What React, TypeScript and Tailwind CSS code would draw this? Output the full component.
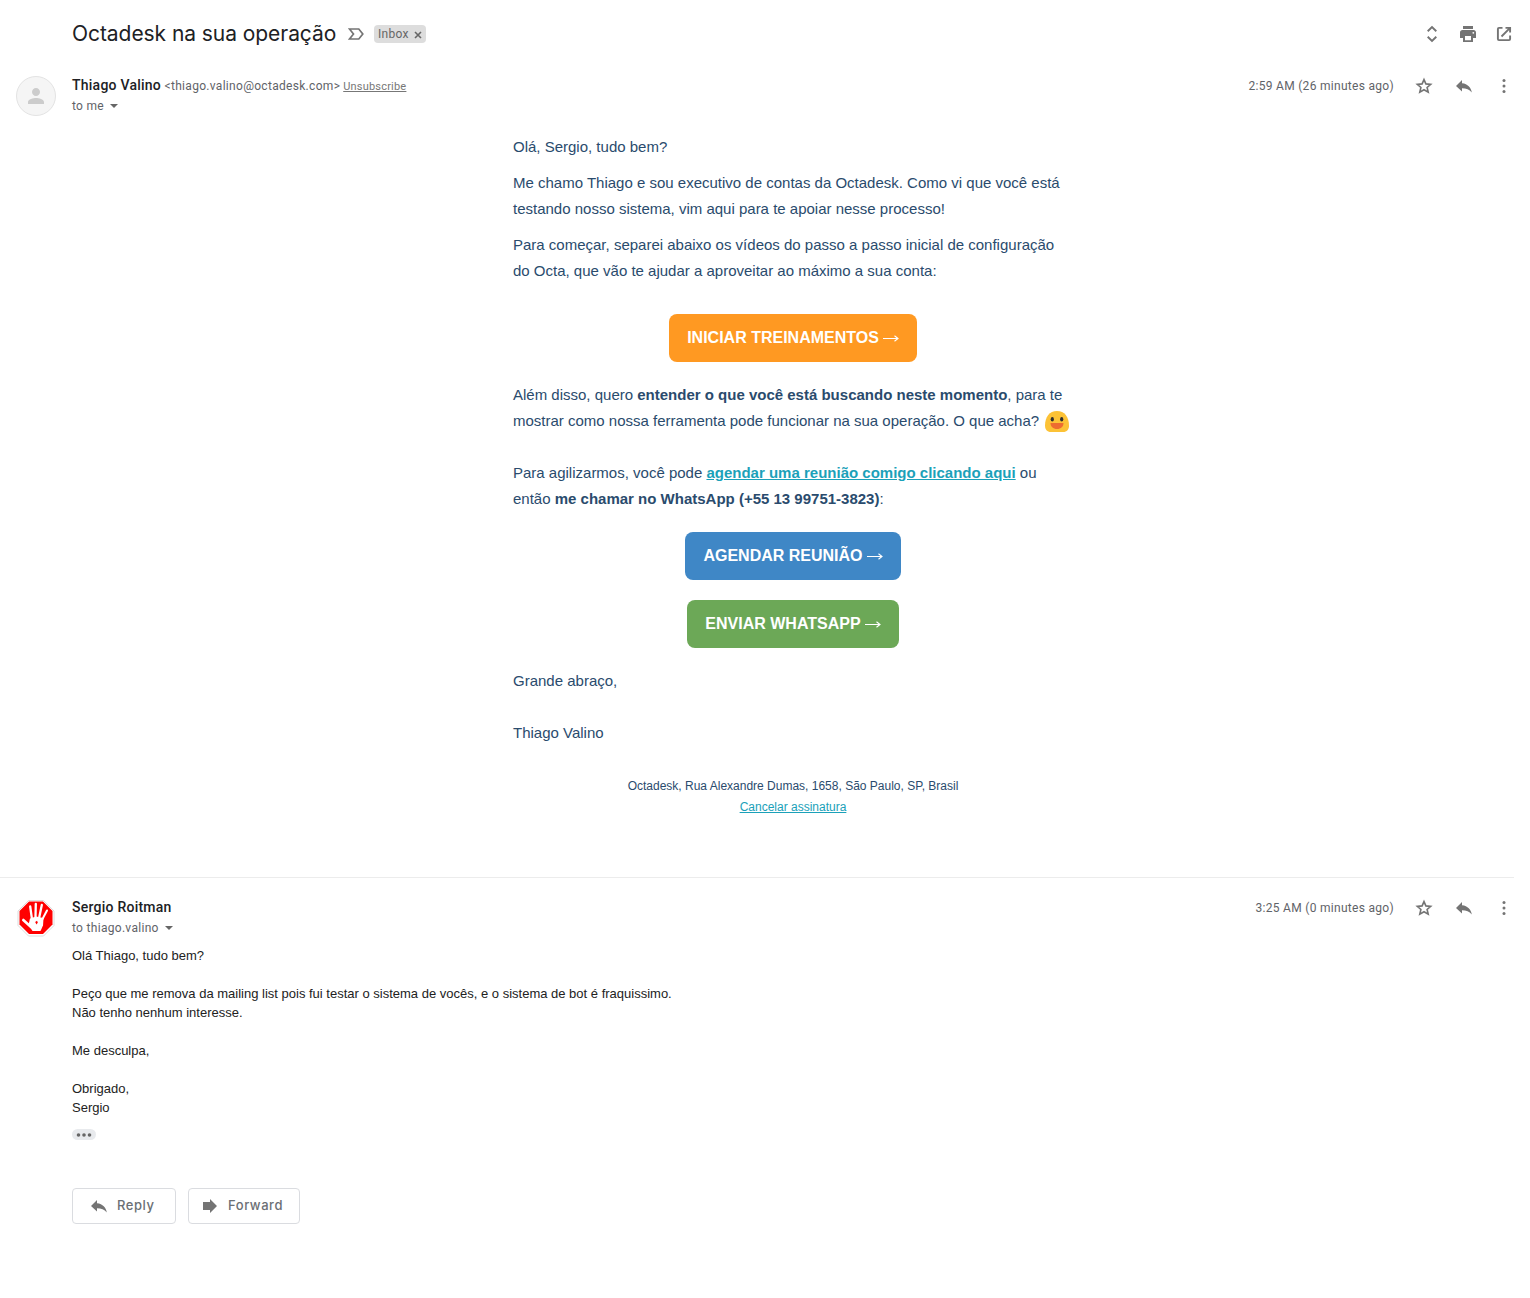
import type { ReactNode } from 'react'
import { MdPerson } from 'react-icons/md'

function ReplyIcon() {
  return (
    <svg width="20" height="20" viewBox="0 0 20 20" fill="#747474">
      <path d="M8 7.300V4L2 9.900L8 15.600V12.200C12.300 12.200 15.400 13.200 17.800 16.400C17 11.600 13.800 7.900 8 7.300Z" />
    </svg>
  )
}

function StarIcon() {
  return (
    <svg width="20" height="20" viewBox="0 0 20 20" fill="none">
      <path
        d="M10 3.600L11.900 7.900L16.700 8.400L13.100 11.500L14.200 16.200L10 13.700L5.800 16.200L6.900 11.500L3.300 8.400L8.100 7.900Z"
        stroke="#747474"
        strokeWidth="1.600"
      />
    </svg>
  )
}

function MoreIcon() {
  return (
    <svg width="20" height="20" viewBox="0 0 20 20" fill="#747474">
      <circle cx="10" cy="4.500" r="1.500" />
      <circle cx="10" cy="10" r="1.500" />
      <circle cx="10" cy="15.500" r="1.500" />
    </svg>
  )
}

interface MessageHeaderProps {
  name: string
  email?: string
  recipient: string
  time: string
  avatar: ReactNode
}

function MessageHeader({ name, email, recipient, time, avatar }: MessageHeaderProps) {
  return (
    <header className="flex h-10 items-start pl-4 pr-4">
      <div className="flex h-10 w-14 shrink-0">{avatar}</div>
      <div className="flex-1">
        <div className="flex h-5 items-center whitespace-nowrap">
          <h3 className="pb-0.5 text-sm font-medium tracking-[0.24px] text-[#202124]">{name}</h3>
          {email && (
            <>
              <span className="ml-[3.5px] text-xs tracking-[0.3px] text-[#5f6368]">&lt;{email}&gt;</span>
              <a className="ml-[3px] pt-0.5 text-[11px] tracking-[0.2px] text-[#777] underline">Unsubscribe</a>
            </>
          )}
        </div>
        <div className="flex h-5 items-center text-xs tracking-[0.3px] text-[#5f6368]">
          to {recipient}
          <svg width="8" height="4" viewBox="0 0 8 4" className="ml-1.5">
            <path d="M0 0H8L4 4Z" fill="#666" />
          </svg>
        </div>
      </div>
      <div className="flex h-5 items-center gap-5">
        <span className="text-xs tracking-[0.3px] text-[#5f6368]">{time}</span>
        <StarIcon />
        <ReplyIcon />
        <MoreIcon />
      </div>
    </header>
  )
}

function CallToAction({ color, children }: { color: string; children: ReactNode }) {
  return (
    <a className={`flex h-12 items-center rounded-lg px-[18px] text-base font-bold text-white ${color}`}>
      {children}
      <svg width="16" height="8" viewBox="0 0 16 8" fill="none" className="ml-1 mt-0.5">
        <path d="M0 3.500H15" stroke="currentColor" />
        <path d="M11.500 0.800L15 3.500L11.500 6.200" stroke="currentColor" strokeWidth="1.100" />
      </svg>
    </a>
  )
}

function SmileEmoji() {
  return (
    <svg width="26" height="26" viewBox="0 0 26 26" className="-mt-0.5 ml-[5px] inline-block align-middle">
      <path d="M13 3C5.500 3 1 9 1 17.500C1 21.500 3 24 7 24H19C23 24 25 21.500 25 17.500C25 9 20.500 3 13 3Z" fill="#fcc236" />
      <ellipse cx="8.300" cy="11.300" rx="1.600" ry="2.200" fill="#2f2f2f" />
      <ellipse cx="17.700" cy="11.300" rx="1.600" ry="2.200" fill="#2f2f2f" />
      <path d="M6.500 15H19.500C19.500 18.500 17 21 13 21C9 21 6.500 18.500 6.500 15Z" fill="#ed6c30" />
    </svg>
  )
}

function StopHand() {
  return (
    <svg width="40" height="40" viewBox="0 0 40 40">
      <path d="M12.500 2.500H27.500L38 13V27.500L27.500 38H12.500L2 27.500V13Z" fill="#fff" stroke="#dcdcdc" />
      <path d="M13 3.500H27L36.500 13V26.500L27 36H13L3.500 26.500V13Z" fill="#f00" />
      <g fill="none" stroke="#fff" strokeLinecap="round">
        <path d="M15.800 20L14.200 8.500" strokeWidth="2.300" />
        <path d="M19.500 19L19.800 6" strokeWidth="2.300" />
        <path d="M23.300 19L25.800 7" strokeWidth="2.300" />
        <path d="M26.500 21L31 12.500" strokeWidth="2" />
        <path d="M15 29L7.300 22" strokeWidth="2.600" />
      </g>
      <path d="M14 20.500L20 18.500L27.500 20L27 27.500L24.500 33H16.500L12.500 27Z" fill="#fff" />
      <path d="M19.200 24L21 22.800L21.800 24.500L20.500 26.500Z" fill="#f00" />
    </svg>
  )
}

function OctadeskEmail() {
  return (
    <div className="ml-[72px] mr-4 mt-[18px]">
      <div className="mx-auto w-[560px] font-['Liberation_Sans',Arial,sans-serif] text-[15px] leading-[26px] text-[#2a4b6d]">
        <p className="mb-2.5">Olá, Sergio, tudo bem?</p>
        <p className="mb-2.5">
          Me chamo Thiago e sou executivo de contas da Octadesk. Como vi que você está
          <br />
          testando nosso sistema, vim aqui para te apoiar nesse processo!
        </p>
        <p>
          Para começar, separei abaixo os vídeos do passo a passo inicial de configuração
          <br />
          do Octa, que vão te ajudar a aproveitar ao máximo a sua conta:
        </p>
        <div className="my-5 flex justify-center pt-2.5">
          <CallToAction color="bg-[#ff9922]">INICIAR TREINAMENTOS</CallToAction>
        </div>
        <p className="h-[52px] whitespace-nowrap">
          Além disso, quero <b>entender o que você está buscando neste momento</b>, para te
          <br />
          mostrar como nossa ferramenta pode funcionar na sua operação. O que acha?
          <SmileEmoji />
        </p>
        <p className="mt-[26px]">
          Para agilizarmos, você pode{' '}
          <a className="font-bold text-[#1ba1b9] underline">agendar uma reunião comigo clicando aqui</a> ou
          <br />
          então <b>me chamar no WhatsApp (+55 13 99751-3823)</b>:
        </p>
        <div className="my-5 flex flex-col items-center gap-5">
          <CallToAction color="bg-[#3f87c6]">AGENDAR REUNIÃO</CallToAction>
          <CallToAction color="bg-[#6ca857]">ENVIAR WHATSAPP</CallToAction>
        </div>
        <p>Grande abraço,</p>
        <p className="mt-[26px]">Thiago Valino</p>
        <footer className="mt-[30px] text-center text-xs leading-[21px]">
          <p>Octadesk, Rua Alexandre Dumas, 1658, São Paulo, SP, Brasil</p>
          <a className="text-[#1ba1b9] underline">Cancelar assinatura</a>
        </footer>
      </div>
    </div>
  )
}

export default function App() {
  return (
    <main className="h-[1298px] overflow-hidden bg-white font-[Roboto,Arial,sans-serif]">
      <div className="flex h-[76px] items-start pl-[72px] pr-4 pt-5">
        <div className="flex h-7 items-center">
          <h1 className="w-[264px] whitespace-nowrap font-['Inter',sans-serif] text-[21px] tracking-[-0.06px] text-[#202124]">
            Octadesk na sua operação
          </h1>
          <svg width="16" height="12" viewBox="0 0 16 12" fill="none" className="ml-3">
            <path d="M1.500 1H10.800L14.800 6L10.800 11H1.500L5.500 6Z" stroke="#747474" strokeWidth="1.700" />
          </svg>
          <span className="ml-2.5 flex h-[18px] w-[52px] items-center rounded bg-[#ddd] px-1 text-xs tracking-[0.3px] text-[#666]">
            Inbox
            <svg width="8" height="8" viewBox="0 0 8 8" className="ml-[5px] mt-0.5 shrink-0">
              <path d="M1 1L7 7M7 1L1 7" stroke="#666" strokeWidth="1.600" />
            </svg>
          </span>
        </div>
        <div className="ml-auto flex h-7 items-center gap-4">
          <svg width="20" height="20" viewBox="0 0 20 20" fill="none" stroke="#747474" strokeWidth="1.900">
            <path d="M5.700 7.300L10 3.100L14.300 7.300M5.700 12.700L10 16.900L14.300 12.700" />
          </svg>
          <svg width="20" height="20" viewBox="0 0 20 20" fill="#747474">
            <path d="M5 2H15V5H5Z" />
            <path d="M4.500 6H15.500C17 6 18 7 18 8.500V14H15V11H5V14H2V8.500C2 7 3 6 4.500 6Z" />
            <path fillRule="evenodd" d="M5 10.500H15V18H5ZM7 12V16.300H13V12Z" />
            <circle cx="15.300" cy="8.800" r="0.900" fill="#fff" />
          </svg>
          <svg width="20" height="20" viewBox="0 0 20 20" fill="none" stroke="#747474" strokeWidth="1.900">
            <path d="M8.500 3.900H5C4.300 3.900 3.900 4.300 3.900 5V15C3.900 15.700 4.300 16.100 5 16.100H15C15.700 16.100 16.100 15.700 16.100 15V11.500" />
            <path d="M11.500 3.900H16.100V8.500M15.800 4.200L7.500 12.500" />
          </svg>
        </div>
      </div>

      <MessageHeader
        name="Thiago Valino"
        email="thiago.valino@octadesk.com"
        recipient="me"
        time="2:59 AM (26 minutes ago)"
        avatar={
          <div className="flex size-10 items-center justify-center rounded-full border border-[#e3e3e3] bg-[#f5f5f5]">
            <MdPerson className="size-6 text-[#ccc]" />
          </div>
        }
      />
      <OctadeskEmail />

      <hr className="mb-5 mr-4 mt-[59px] border-[#ececec]" />

      <MessageHeader
        name="Sergio Roitman"
        recipient="thiago.valino"
        time="3:25 AM (0 minutes ago)"
        avatar={<StopHand />}
      />
      <div className="ml-[72px] mt-2 font-['Liberation_Sans',Arial,sans-serif] text-[13px] leading-[19px] text-[#222]">
        <p>Olá Thiago, tudo bem?</p>
        <p className="mt-[19px]">
          Peço que me remova da mailing list pois fui testar o sistema de vocês, e o sistema de bot é fraquissimo.
        </p>
        <p>Não tenho nenhum interesse.</p>
        <p className="mt-[19px]">Me desculpa,</p>
        <p className="mt-[19px]">Obrigado,</p>
        <p>Sergio</p>
        <div className="mt-3 flex h-[11px] w-6 items-center justify-center rounded-full bg-[#e8eaed]">
          <svg width="16" height="4" viewBox="0 0 16 4" fill="#666">
            <circle cx="2.500" cy="2" r="1.800" />
            <circle cx="8" cy="2" r="1.800" />
            <circle cx="13.500" cy="2" r="1.800" />
          </svg>
        </div>
      </div>

      <div className="ml-[72px] mt-12 flex gap-3 font-['Inter',sans-serif] text-[13px] font-medium tracking-[0.55px] text-[#6b6f74]">
        <button className="flex h-9 w-[104px] items-center rounded border border-[#dadce0] pl-4">
          <span className="mr-2">
            <ReplyIcon />
          </span>
          Reply
        </button>
        <button className="flex h-9 w-28 items-center rounded border border-[#dadce0] pl-3.5">
          <svg width="14" height="14" viewBox="0 0 14 14" className="mr-[11px]">
            <path d="M0 3H7V0L14 7L7 14V11H0Z" fill="#747474" />
          </svg>
          Forward
        </button>
      </div>
    </main>
  )
}
